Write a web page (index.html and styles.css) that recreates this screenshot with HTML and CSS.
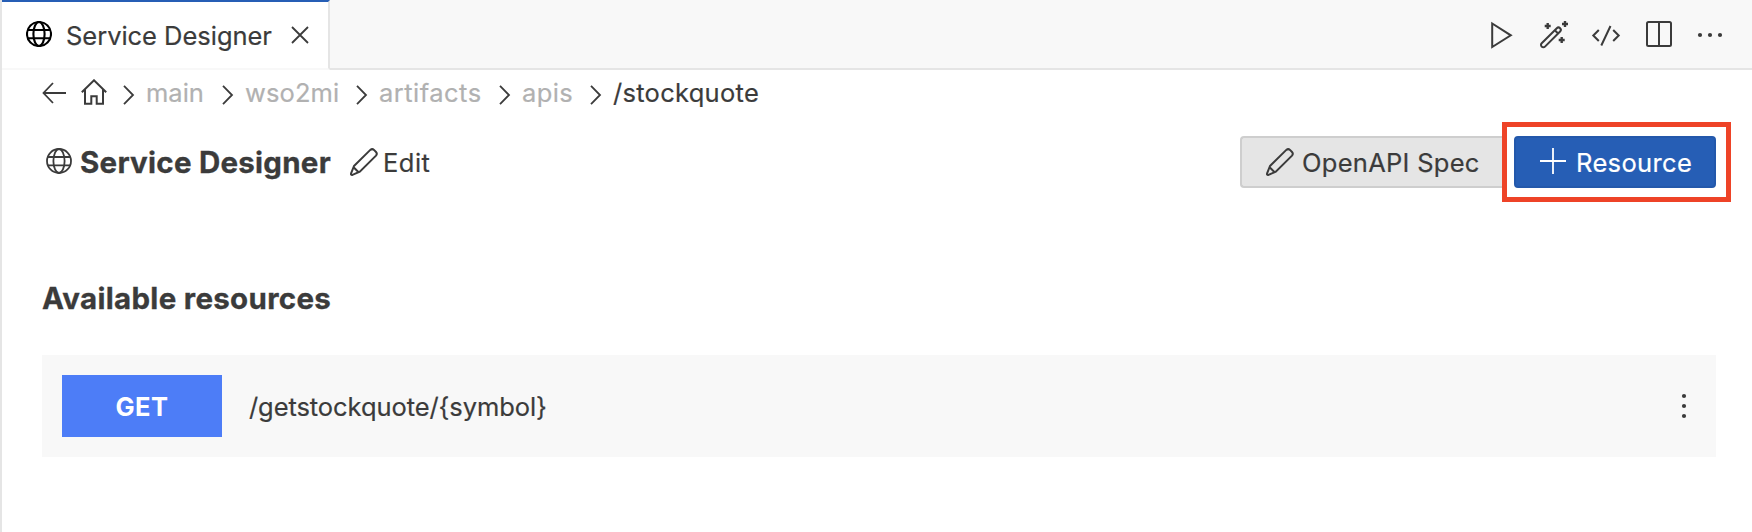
FILE: index.html
```html
<!DOCTYPE html>
<html lang="en">
<head>
<meta charset="utf-8">
<title>Service Designer</title>
<link rel="stylesheet" href="styles.css">
</head>
<body>
<svg class="defs" aria-hidden="true">
  <symbol id="globe" viewBox="0 0 26 26"><circle cx="13" cy="13" r="12"/><ellipse cx="13" cy="13" rx="5.6" ry="12"/><path d="M2 9h22M2 17.3h22"/></symbol>
  <symbol id="chevron" viewBox="0 0 12 20"><path d="M1 .8 10 10 1 19.200"/></symbol>
  <symbol id="pencil" viewBox="0 0 28 28"><path d="M4 18 20.300 1.900Q22.200.3 24 1.900L26 4Q27.600 5.800 26 7.600L9.800 23.700 2.500 26.900Q.6 27.300 1.100 25.300ZM3.600 19.200 8.600 24.200"/></symbol>
</svg>
<div class="window">
  <header class="tabbar">
    <div class="tab">
      <svg class="icon globe tab-globe"><use href="#globe"/></svg>
      <span class="tab-title">Service Designer</span>
      <svg class="icon close" viewBox="0 0 18 18"><path d="M1 1 17 17M17 1 1 17"/></svg>
    </div>
    <div class="actions">
      <svg class="icon act" viewBox="0 0 28 28"><path d="M4.200 2.500V26L22.800 14.300Z"/></svg>
      <svg class="icon act" viewBox="0 0 28 28"><path d="M1.700 22.200 16.800 7.200a2.300 2.300 0 0 1 3.300 3.300L5 25.600a2.300 2.300 0 0 1-3.300-3.400ZM14.800 9.200l3.300 3.300"/><path class="sparks" d="M7.700 2v6M4.700 5h6M25 0v6M22 3h6M21.700 16v6M18.700 19h6"/></svg>
      <svg class="icon act" viewBox="0 0 28 28"><path d="M6.800 9 1.300 14.500 6.800 20M21.200 9l5.500 5.500-5.500 5.500M18.500 5 9.300 24.500"/></svg>
      <svg class="icon act" viewBox="0 0 28 28"><rect x="3" y="1" width="24" height="24" rx="1.500"/><path d="M15 1v24"/></svg>
      <svg class="icon act dots" viewBox="0 0 28 28"><circle cx="4" cy="14" r="2.100"/><circle cx="14" cy="14" r="2.100"/><circle cx="24" cy="14" r="2.100"/></svg>
    </div>
  </header>
  <nav class="crumbs">
    <svg class="icon back" viewBox="0 0 24 22"><path d="M11 1 1.500 11 11 21M1.500 11H24"/></svg>
    <svg class="icon home" viewBox="0 0 26 26"><path d="M.8 13.200 13 1.300 25.200 13.200M4 10.300V24.700H10.300V17.200H15.700V24.700H22V10.300"/></svg>
    <svg class="icon chevron"><use href="#chevron"/></svg><span class="crumb main">main</span>
    <svg class="icon chevron"><use href="#chevron"/></svg><span class="crumb project">wso2mi</span>
    <svg class="icon chevron"><use href="#chevron"/></svg><span class="crumb artifacts">artifacts</span>
    <svg class="icon chevron"><use href="#chevron"/></svg><span class="crumb apis">apis</span>
    <svg class="icon chevron"><use href="#chevron"/></svg><span class="crumb current">/stockquote</span>
  </nav>
  <section class="heading">
    <svg class="icon globe"><use href="#globe"/></svg>
    <h1>Service Designer</h1>
    <svg class="icon pencil"><use href="#pencil"/></svg>
    <span class="edit">Edit</span>
    <div class="buttons">
      <div class="button secondary"><svg class="icon pencil"><use href="#pencil"/></svg><span class="spec">OpenAPI Spec</span></div>
      <div class="highlight">
        <div class="button primary"><svg class="icon plus" viewBox="0 0 26 26"><path d="M13 0v26M0 13h26"/></svg><span class="resource">Resource</span></div>
      </div>
    </div>
  </section>
  <h2>Available resources</h2>
  <section class="card">
    <div class="method"><span>GET</span></div>
    <span class="path">/getstockquote/{symbol}</span>
    <svg class="icon dots kebab" viewBox="0 0 6 28"><circle cx="3" cy="4" r="2.100"/><circle cx="3" cy="14" r="2.100"/><circle cx="3" cy="24" r="2.100"/></svg>
  </section>
</div>
</body>
</html>
```
FILE: styles.css
```css
* { box-sizing: border-box; }
body { margin: 0; background: #fff; color: #3b3b3b; font: 25.500px/32px Inter, sans-serif; }
.defs { position: absolute; width: 0; height: 0; }
.window { height: 532px; border-left: 2px solid #e5e5e5; overflow: hidden; }
.icon { display: block; flex: none; fill: none; stroke: #3b3b3b; stroke-width: 1.800; }
span, h1, h2 { white-space: nowrap; }
.tabbar { display: flex; height: 70px; background: #f8f8f8; border-bottom: 2px solid #e5e5e5; }
.tab { display: flex; width: 328px; height: 70px; padding: 19px 0 0 24px; background: #fff; border-top: 2px solid #265eb5; border-right: 2px solid #e5e5e5; border-bottom: 2px solid #f8f8f8; }
.globe { width: 26px; height: 26px; }
.tab-globe { stroke: #000; stroke-width: 2.100; }
.tab-title { width: 225px; padding-left: 14px; margin-top: -1px; letter-spacing: -0.03px; -webkit-text-stroke: 0.2px; }
.close { width: 18px; height: 18px; margin: 5px 0 0 14px; }
.actions { display: flex; margin-left: auto; padding: 21px 28px 0 0; gap: 24px; }
.act { width: 28px; height: 28px; stroke-width: 2; overflow: visible; }
.sparks { stroke-width: 2.400; }
.dots { fill: #3b3b3b; stroke: none; }
.crumbs { display: flex; height: 50px; padding: 7px 0 0 40px; }
.crumbs, .edit, .button, .path { -webkit-text-stroke: 0.2px; }
.back { width: 24px; height: 22px; margin-top: 5px; }
.home { width: 26px; height: 26px; margin: 2px 16px 0 15px; stroke-width: 2; }
.chevron { width: 12px; height: 20px; margin: 8px 11px 0 0; }
.crumb { color: #b1b1b1; }
.main { width: 76px; }
.project { width: 111px; letter-spacing: 0.1px; }
.artifacts { width: 120px; letter-spacing: 0.480px; }
.apis { width: 68px; letter-spacing: 0.400px; }
.crumbs .current { color: #3b3b3b; letter-spacing: 0.280px; }
.heading { display: flex; height: 90px; padding: 28px 21px 0 44px; }
h1, h2 { margin: 0; font-size: 29.500px; line-height: 36px; font-weight: 700; -webkit-text-stroke: 0.300px; }
h1 { width: 270px; margin: -4px 0 0 8px; letter-spacing: 0.250px; }
.pencil { width: 28px; height: 28px; stroke-width: 2; }
.edit { margin: -1px 0 0 5px; letter-spacing: 0.500px; }
.buttons { display: flex; margin: -26px 0 0 auto; }
.button { display: flex; height: 52px; padding: 10px 24px; border: 2px solid #cecece; border-radius: 4px; background: #e5e5e5; }
.secondary { width: 262px; margin: 14px 0 0; border-right: 0; border-radius: 4px 0 0 4px; }
.spec { margin: -1px 0 0 8px; letter-spacing: 0.280px; }
.highlight { width: 229px; height: 80px; padding: 9px 0 0 7px; border: 5px solid #ee4327; background: #fff; }
.primary { width: 202px; background: #265eb5; border-color: #2358ab; color: #fff; }
.plus { width: 26px; height: 26px; stroke: #fff; }
.resource { margin: -1px 0 0 10px; letter-spacing: 0.350px; }
h2 { margin: 70px 0 0 40px; height: 75px; letter-spacing: 0.300px; }
.card { display: flex; width: 1674px; height: 102px; margin-left: 40px; padding: 20px 29px 0 20px; background: #f8f8f8; }
.method { width: 160px; height: 62px; padding-top: 16px; background: #4d7df7; color: #fff; text-align: center; font-weight: 700; letter-spacing: 0.400px; }
.path { margin: 16px 0 0 27px; letter-spacing: -0.080px; }
.kebab { width: 6px; height: 28px; margin: 17px 0 0 auto; }
```
